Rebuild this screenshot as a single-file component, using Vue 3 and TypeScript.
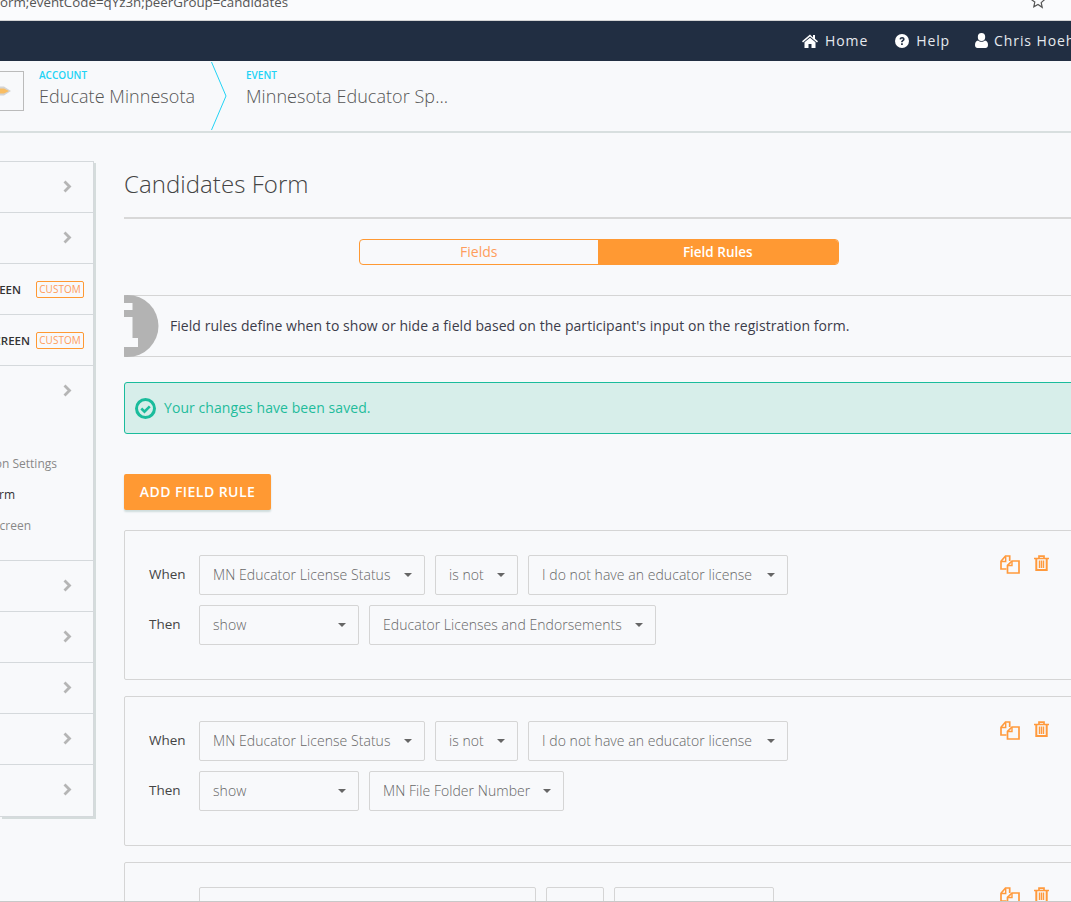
<script setup lang="ts">
interface Choice {
  text: string
  wide?: boolean
  width?: number
}

interface Rule {
  when: Choice[]
  then: Choice[]
}

const sideRows = [
  { id: 1, label: 'EVENT OVERVIEW', custom: false, chevron: true },
  { id: 2, label: 'EVENT DETAILS', custom: false, chevron: true },
  { id: 3, label: 'WAITLIST SCREEN', custom: true, chevron: false },
  { id: 4, label: 'REGISTRATION SCREEN', custom: true, chevron: false },
]
const sideRowsBelow = ['Payments', 'Emails', 'Reports', 'Website', 'Settings']

const rules: Rule[] = [
  {
    when: [
      { text: 'MN Educator License Status', width: 226 },
      { text: 'is not', width: 83 },
      { text: 'I do not have an educator license', width: 260 },
    ],
    then: [{ text: 'show', wide: true }, { text: 'Educator Licenses and Endorsements' }],
  },
  {
    when: [
      { text: 'MN Educator License Status', width: 226 },
      { text: 'is not', width: 83 },
      { text: 'I do not have an educator license', width: 260 },
    ],
    then: [{ text: 'show', wide: true }, { text: 'MN File Folder Number' }],
  },
  {
    when: [
      { text: 'Educator Work Location or Current Role', width: 337 },
      { text: 'is', width: 58 },
      { text: 'Current or Past Year', width: 160 },
    ],
    then: [{ text: 'show', wide: true }, { text: 'School District' }],
  },
]
</script>

<template>
  <div class="page">
    <div class="urlbar">
      <span class="url">orm;eventCode=qYz3h;peerGroup=candidates</span>
      <svg class="star" viewBox="0 0 16 16" width="16" height="16">
        <path d="M8 1.5l2 4.4 4.8.5-3.6 3.2 1 4.7L8 11.4l-4.2 2.4 1-4.7L1.200 6.400 6 5.900z" fill="none" stroke="#555" stroke-width="1.2" />
      </svg>
    </div>

    <header class="navbar">
      <nav class="navlinks">
        <a class="navlink">
          <svg viewBox="0 0 16 14" width="16" height="14"><path d="M8 0.500L0 7.200l1 1.200L8 2.600l7 5.800 1-1.200-3-2.500V1h-2v2.600zM8 3.800L2.500 8.300V14h4V10h3v4h4V8.300z" fill="#fff" /></svg>
          Home
        </a>
        <a class="navlink">
          <svg viewBox="0 0 14 14" width="14" height="14">
            <circle cx="7" cy="7" r="7" fill="#fff" />
            <path d="M4.500 5.300C4.700 3.900 5.700 3.100 7.100 3.100c1.500 0 2.500.9 2.500 2.100 0 1-.6 1.500-1.300 2-.5.3-.6.500-.6 1H6.100c0-1 .3-1.500 1-2 .5-.3.8-.5.8-1 0-.4-.3-.7-.8-.7-.6 0-.9.300-1 .9zM6.100 9.200h1.700v1.700H6.100z" fill="#212e42" />
          </svg>
          Help
        </a>
        <a class="navlink">
          <svg viewBox="0 0 13 15" width="13" height="15">
            <ellipse cx="6.500" cy="4" rx="3.700" ry="4" fill="#fff" />
            <path d="M3 7.500c1 .9 2.200 1.300 3.500 1.300S9 8.400 10 7.500c2 .4 3 2 3 4.500 0 1.800-1 3-2.500 3h-8C1 15 0 13.800 0 12c0-2.500 1-4.100 3-4.500z" fill="#fff" />
          </svg>
          Chris Hoehn
        </a>
      </nav>
    </header>

    <section class="crumbs">
      <div class="logo-box">
        <svg viewBox="0 0 12 10" width="12" height="10">
          <path d="M0 0.500h4l7 4.500-7 4.500H0z" fill="#d4d4d4" />
          <path d="M0 2.500h4l5 2.500-5 2.500H0z" fill="#f9bd62" />
        </svg>
      </div>
      <div class="crumb crumb-account">
        <div class="crumb-label">ACCOUNT</div>
        <div class="crumb-name">Educate Minnesota</div>
      </div>
      <svg class="crumb-arrow" viewBox="0 0 16 70" width="16" height="70">
        <path d="M0.500 1L15 35 0.500 69" fill="none" stroke="#22d3f5" />
      </svg>
      <div class="crumb">
        <div class="crumb-label">EVENT</div>
        <div class="crumb-name">Minnesota Educator Sp...</div>
      </div>
    </section>

    <div class="body">
      <aside class="sidebar">
        <div v-for="row in sideRows" :key="row.id" class="side-row">
          <span v-if="row.custom" class="side-label">{{ row.label }}</span>
          <span v-if="row.custom" class="badge">CUSTOM</span>
          <svg v-if="row.chevron" class="chev" viewBox="0 0 9 13" width="9" height="13"><path d="M1.500 1.500L6.500 6.500 1.500 11.500" fill="none" stroke="#b5b5b5" stroke-width="2.800" /></svg>
        </div>
        <div class="side-group">
          <div class="side-group-head">
            <svg class="chev" viewBox="0 0 9 13" width="9" height="13"><path d="M1.500 1.500L6.500 6.500 1.500 11.500" fill="none" stroke="#b5b5b5" stroke-width="2.800" /></svg>
          </div>
          <ul class="side-sub">
            <li class="sub-a">Registration Settings</li>
            <li class="sub-b">Candidates Form</li>
            <li class="sub-c">Confirmation Screen</li>
          </ul>
        </div>
        <div v-for="name in sideRowsBelow" :key="name" class="side-row" :title="name">
          <svg class="chev" viewBox="0 0 9 13" width="9" height="13"><path d="M1.500 1.500L6.500 6.500 1.500 11.500" fill="none" stroke="#b5b5b5" stroke-width="2.800" /></svg>
        </div>
      </aside>

      <main class="main">
        <h1 class="title">Candidates Form</h1>

        <div class="tabs">
          <div class="tab">Fields</div>
          <div class="tab tab-on">Field Rules</div>
        </div>

        <div class="info">
          <svg class="info-icon" viewBox="0 0 35 62" width="35" height="62">
            <circle cx="3.500" cy="31" r="31" fill="#b3b3b3" />
            <path d="M0 8h8.500v7H0zM0 22h8.500v21H14v9H0z" fill="#f8f9fb" />
          </svg>
          <p>Field rules define when to show or hide a field based on the participant's input on the registration form.</p>
        </div>

        <div class="alert">
          <svg viewBox="0 0 21 21" width="21" height="21">
            <circle cx="10.500" cy="10.500" r="9" fill="none" stroke="#1abc9c" stroke-width="3" />
            <path d="M6.300 10.500l3.200 3.200 5.300-5.300" fill="none" stroke="#1abc9c" stroke-width="2.600" />
          </svg>
          <span>Your changes have been saved.</span>
        </div>

        <button class="add" type="button">ADD FIELD RULE</button>

        <div v-for="(rule, i) in rules" :key="i" class="card">
          <div class="card-rows">
            <div class="rule-row">
              <span class="rule-word">When</span>
              <div v-for="s in rule.when" :key="s.text" class="select" :style="s.width ? { width: s.width + 'px' } : undefined">
                <span>{{ s.text }}</span><i class="caret" />
              </div>
            </div>
            <div class="rule-row">
              <span class="rule-word">Then</span>
              <div v-for="s in rule.then" :key="s.text" class="select" :class="{ 'select-wide': s.wide }">
                <span>{{ s.text }}</span><i class="caret" />
              </div>
            </div>
          </div>
          <div class="card-actions">
            <svg viewBox="0 0 20 19" width="20" height="19">
              <path d="M6.500 14H1V6.200L5.500 1h4.200v5" fill="none" stroke="#ff9a3d" stroke-width="1.700" />
              <path d="M1 6.500h4.700V1.500" fill="none" stroke="#ff9a3d" stroke-width="1.400" />
              <path d="M7.500 18V10.300L12 6h7v12z" fill="none" stroke="#ff9a3d" stroke-width="1.700" />
              <path d="M7.500 10.500H12V6" fill="none" stroke="#ff9a3d" stroke-width="1.400" />
            </svg>
            <svg viewBox="0 0 15 16" width="15" height="16">
              <path d="M0 3.500h15M5 3V1.200h5V3" fill="none" stroke="#ff9a3d" stroke-width="1.700" />
              <path d="M2.300 3.500v11.400h10.400V3.500" fill="none" stroke="#ff9a3d" stroke-width="2" />
              <path d="M5.500 5.500v7.500M7.500 5.500v7.500M9.500 5.500v7.500" fill="none" stroke="#ff9a3d" stroke-width="1.400" />
            </svg>
          </div>
        </div>
      </main>
    </div>
  </div>
</template>

<style>
html, body { margin: 0; background: #f8f9fb; overflow: hidden; }
</style>

<style scoped>
.page {
  width: 1071px;
  height: 902px;
  box-sizing: border-box;
  border-bottom: 1px solid #c8c8c8;
  overflow: hidden;
  background: #f8f9fb;
  font-family: "Open Sans", sans-serif;
  color: #444;
}
.urlbar {
  height: 20px;
  border-bottom: 1px solid #d4d4d4;
  display: flex;
  justify-content: space-between;
  overflow: hidden;
  background: #fafbfd;
}
.url {
  margin-top: -8px;
  font-size: 13.330px;
  line-height: 20px;
  color: #555;
}
.star { margin: -7px 25px 0 0; }
.navbar {
  height: 40px;
  box-sizing: border-box;
  padding-bottom: 1px;
  background: #212e42;
  display: flex;
  align-items: center;
}
.navlinks {
  display: flex;
  gap: 27px;
  margin-left: 802px;
  white-space: nowrap;
}
.navlink {
  display: flex;
  align-items: center;
  gap: 7px;
  font-size: 14px;
  letter-spacing: 0.900px;
  color: #e6eaef;
}
.navlink:last-child { gap: 6px; margin-left: -2px; }
.crumbs {
  height: 70px;
  border-bottom: 2px solid #d8dfdf;
  display: flex;
  align-items: flex-start;
}
.logo-box {
  width: 23px;
  height: 38px;
  margin-top: 10px;
  border: 1px solid #bbb;
  border-left: none;
  display: flex;
  align-items: center;
  justify-content: flex-start;
}
.crumb { padding-top: 7px; white-space: nowrap; }
.crumb-account { margin-left: 15px; width: 172px; }
.crumb-arrow { margin-right: 19px; }
.crumb-label {
  font-size: 10px;
  line-height: 14px;
  font-weight: 600;
  color: #22d3f5;
}
.crumb-name {
  font-size: 18px;
  line-height: 25px;
  margin-top: 2px;
  font-weight: 300;
  letter-spacing: 0.050px;
  color: #555;
}
.body {
  display: flex;
  align-items: flex-start;
  padding-top: 28px;
}
.sidebar {
  flex: none;
  width: 93px;
  margin-right: 30px;
  border: 1px solid #d5d9dc;
  border-left: none;
  box-shadow: 2px 2px 0 #d5dcdc;
  overflow: hidden;
}
.side-row {
  height: 50px;
  border-bottom: 1px solid #d5d9dc;
  display: flex;
  align-items: center;
  justify-content: flex-end;
  padding-right: 21px;
  white-space: nowrap;
}
.side-row:last-child { border-bottom: none; height: 51px; }
.side-label {
  font-size: 11.500px;
  font-weight: 600;
  color: #333;
}
.badge {
  flex: none;
  box-sizing: border-box;
  width: 48px;
  height: 17px;
  font-size: 10px;
  line-height: 15px;
  text-align: center;
  border: 1px solid #ff9933;
  border-radius: 2px;
  color: #ff9d5c;
  margin-left: 6px;
}
.side-row:nth-child(3) .badge { margin-left: 15px; }
.side-row:nth-child(3), .side-row:nth-child(4) { padding-right: 9px; }
.chev { flex: none; margin-bottom: 2px; }
.side-group {
  height: 194px;
  border-bottom: 1px solid #d5d9dc;
}
.side-group-head {
  height: 50px;
  display: flex;
  align-items: center;
  justify-content: flex-end;
  padding-right: 21px;
}
.side-sub {
  list-style: none;
  margin: 32px 0 0;
  padding: 0;
  font-size: 12px;
  line-height: 31px;
  white-space: nowrap;
}
.side-sub li { display: flex; justify-content: flex-end; }
.sub-a { color: #888; padding-right: 36px; }
.sub-b { color: #333; padding-right: 78px; }
.sub-c { color: #888; padding-right: 62px; }
.main {
  flex: none;
  width: 950px;
}
.title {
  margin: 0;
  height: 56px;
  border-bottom: 2px solid #d8d8d8;
  font-size: 24px;
  line-height: 46px;
  font-weight: 300;
  letter-spacing: 0.050px;
  color: #444;
}
.tabs {
  width: 480px;
  height: 26px;
  box-sizing: border-box;
  margin: 20px auto 30px;
  display: flex;
  border: 1.500px solid #ff9933;
  border-radius: 4px;
  overflow: hidden;
}
.tab {
  flex: none;
  width: 237.500px;
  text-align: center;
  font-size: 14px;
  line-height: 24px;
  color: #ff9d5c;
}
.tab-on {
  flex: 1;
  background: #ff9933;
  color: #fff;
  font-size: 13.500px;
  font-weight: 600;
}
.info {
  height: 60px;
  border-top: 1px solid #d5d5d5;
  border-bottom: 1px solid #d5d5d5;
  display: flex;
  align-items: center;
  gap: 11px;
}
.info-icon { flex: none; }
.info p {
  margin: 0 0 2px;
  font-size: 14px;
  letter-spacing: 0.050px;
  color: #3c3c4a;
}
.alert {
  height: 50px;
  margin-top: 25px;
  display: flex;
  align-items: center;
  gap: 8px;
  padding-left: 10px;
  background: #d7eeea;
  border: 1px solid #1abc9c;
  border-radius: 3px;
  font-size: 14px;
  letter-spacing: 0.070px;
  color: #1fbc9c;
}
.alert span { margin-bottom: 2px; }
.add {
  display: block;
  margin: 40px 0 20px;
  width: 147px;
  height: 36px;
  padding: 0 0 2px 0;
  background: #ff9933;
  border: none;
  border-radius: 2px;
  box-shadow: 0 2px 2px #cfdcdc;
  font-family: inherit;
  font-size: 14px;
  font-weight: 600;
  letter-spacing: 0.450px;
  color: #fff;
}
.card {
  height: 150px;
  box-sizing: border-box;
  margin-bottom: 16px;
  border: 1px solid #d5d5d5;
  border-radius: 2px;
  padding: 24px 24px 0;
  display: flex;
  justify-content: space-between;
}
.card-rows {
  display: flex;
  flex-direction: column;
  gap: 10px;
}
.rule-row {
  display: flex;
  gap: 10px;
  align-items: center;
}
.rule-word {
  width: 40px;
  font-size: 13.500px;
  color: #444;
  margin-top: -2px;
}
.select {
  height: 40px;
  box-sizing: border-box;
  display: flex;
  align-items: center;
  justify-content: space-between;
  gap: 13px;
  padding: 0 12px 1px 13px;
  border: 1px solid #d5d5d5;
  border-radius: 2px;
  font-size: 14px;
  font-weight: 300;
  letter-spacing: 0.050px;
  color: #666;
  white-space: nowrap;
}
.select-wide { width: 160px; }
.caret {
  width: 0;
  height: 0;
  border-left: 4px solid transparent;
  border-right: 4px solid transparent;
  border-top: 4px solid #666;
}
.card-actions {
  display: flex;
  gap: 14px;
  align-items: flex-start;
}
</style>
